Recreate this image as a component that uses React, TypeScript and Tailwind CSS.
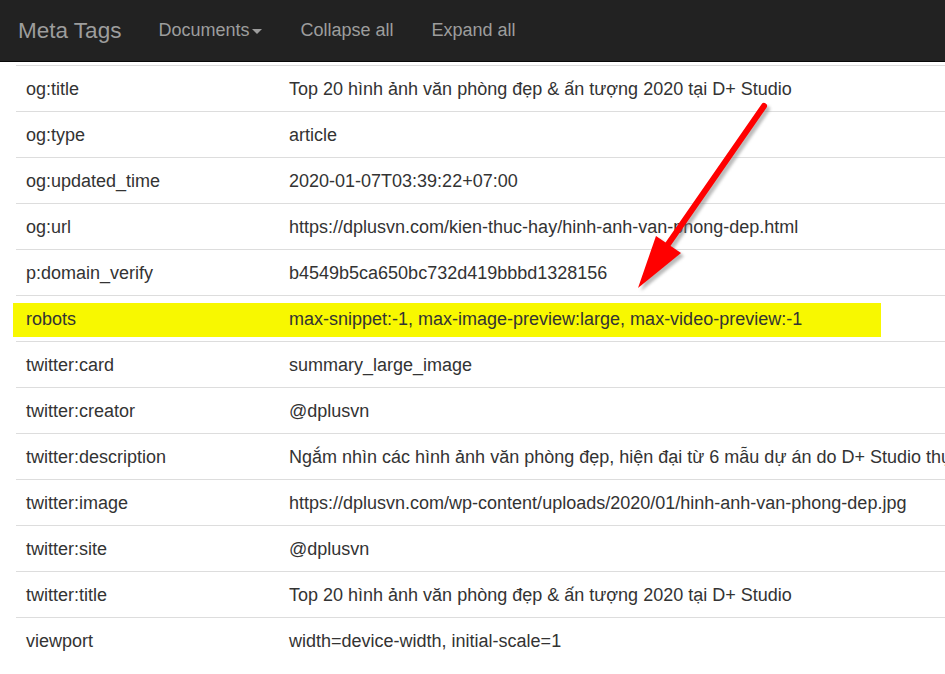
import React from "react";

const rows: [string, string][] = [
  ["og:title", "Top 20 hình ảnh văn phòng đẹp & ấn tượng 2020 tại D+ Studio"],
  ["og:type", "article"],
  ["og:updated_time", "2020-01-07T03:39:22+07:00"],
  ["og:url", "https://dplusvn.com/kien-thuc-hay/hinh-anh-van-phong-dep.html"],
  ["p:domain_verify", "b4549b5ca650bc732d419bbbd1328156"],
  ["robots", "max-snippet:-1, max-image-preview:large, max-video-preview:-1"],
  ["twitter:card", "summary_large_image"],
  ["twitter:creator", "@dplusvn"],
  [
    "twitter:description",
    "Ngắm nhìn các hình ảnh văn phòng đẹp, hiện đại từ 6 mẫu dự án do D+ Studio thực hiện",
  ],
  ["twitter:image", "https://dplusvn.com/wp-content/uploads/2020/01/hinh-anh-van-phong-dep.jpg"],
  ["twitter:site", "@dplusvn"],
  ["twitter:title", "Top 20 hình ảnh văn phòng đẹp & ấn tượng 2020 tại D+ Studio"],
  ["viewport", "width=device-width, initial-scale=1"],
];

function Arrow() {
  return (
    <svg
      className="absolute left-0 top-0 pointer-events-none"
      width="945"
      height="674"
      viewBox="0 0 945 674"
    >
      <defs>
        <filter id="sh" x="-20%" y="-20%" width="140%" height="140%">
          <feGaussianBlur stdDeviation="1.5" />
        </filter>
      </defs>
      <g filter="url(#sh)" opacity="0.5" transform="translate(3,3)">
        <line x1="764" y1="106" x2="664" y2="250" stroke="#777" strokeWidth="6" strokeLinecap="round" />
        <polygon points="638,288 656,236 681,253" fill="#777" />
      </g>
      <line x1="764" y1="106" x2="664" y2="250" stroke="#f00" strokeWidth="6" strokeLinecap="round" />
      <polygon points="638,288 656,236 681,253" fill="#f00" />
    </svg>
  );
}

export default function App() {
  return (
    <div
      className="relative w-[945px] h-[674px] overflow-hidden bg-white"
      style={{ fontFamily: '"Liberation Sans", Arial, sans-serif' }}
    >
      <nav className="h-[62px] bg-[#222] border-b border-[#080808] flex items-center text-[#9d9d9d]">
        <span className="ml-[18px] text-[22.5px] mr-[37px]">Meta Tags</span>
        <span className="text-[18px] flex items-center mr-[38px]">
          Documents
          <span className="ml-[3px] mt-[2px] w-0 h-0 border-x-[5px] border-x-transparent border-t-[5px] border-t-[#9d9d9d]" />
        </span>
        <span className="text-[18px] mr-[38px]">Collapse all</span>
        <span className="text-[18px]">Expand all</span>
      </nav>
      <div className="mt-[3px] ml-[16px] w-[1100px] text-[18px] text-[#333]">
        {rows.map(([k, v]) => (
          <div
            key={k}
            className="relative flex h-[46px] items-center pt-[1px] border-t border-[#ddd] whitespace-nowrap"
          >
            {k === "robots" && (
              <div className="absolute left-[-3px] top-[7px] w-[868px] h-[34px] bg-[#f8f800]" />
            )}
            <div className="relative w-[263px] pl-[10px]">{k}</div>
            <div className="relative pl-[10px]">{v}</div>
          </div>
        ))}
      </div>
      <Arrow />
    </div>
  );
}
